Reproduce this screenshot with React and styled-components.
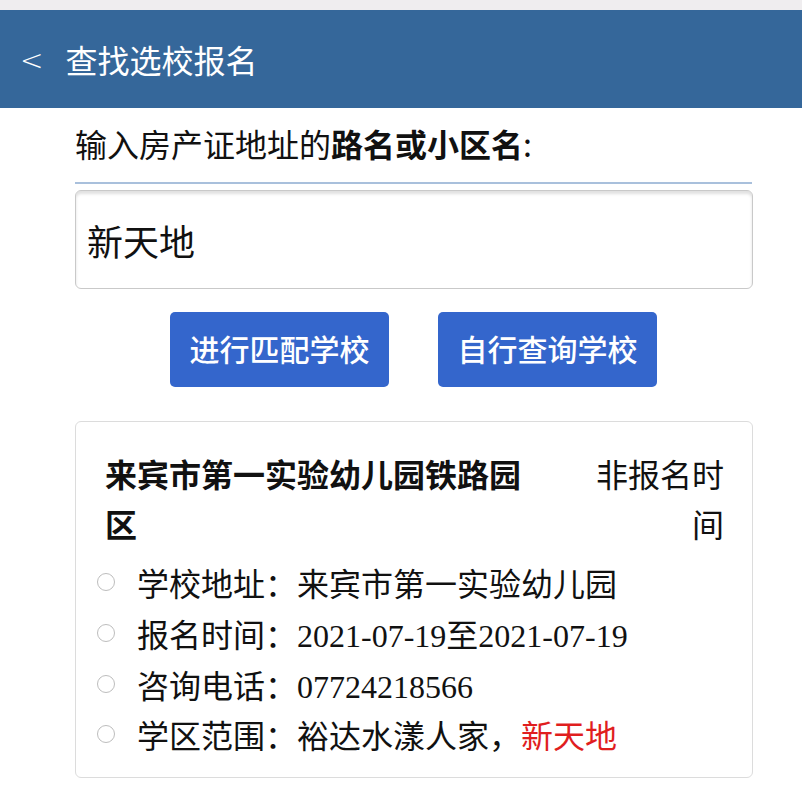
import styled, { createGlobalStyle } from 'styled-components';

const GlobalStyle = createGlobalStyle`
  body {
    margin: 0;
    background: #fff;
    font-family: "Noto Sans CJK SC", "Noto Sans", sans-serif;
    color: #111;
  }
`;

const details = [
  { label: '学校地址：', value: '来宾市第一实验幼儿园' },
  { label: '报名时间：', value: '2021-07-19至2021-07-19' },
  { label: '咨询电话：', value: '07724218566' },
  { label: '学区范围：', value: '裕达水漾人家，', hit: '新天地' },
];

const App = () => {
  return (
    <>
      <GlobalStyle />
      <S.Page>
        <S.StatusStrip />
        <S.Header>
          <S.Back>&lt;</S.Back>
          <S.Title>查找选校报名</S.Title>
        </S.Header>
        <S.Content>
          <S.Label>
            输入房产证地址的<b>路名或小区名</b>:
          </S.Label>
          <S.Divider />
          <S.Input>新天地</S.Input>
          <S.Actions>
            <S.Button>进行匹配学校</S.Button>
            <S.Button>自行查询学校</S.Button>
          </S.Actions>
          <S.Card>
            <S.CardHead>
              <S.SchoolName>来宾市第一实验幼儿园铁路园区</S.SchoolName>
              <S.Status>非报名时间</S.Status>
            </S.CardHead>
            <S.List>
              {details.map(item => (
                <S.Item key={item.label}>
                  <S.Dot />
                  <span>
                    {item.label}
                    {item.value}
                    {item.hit && <S.Hit>{item.hit}</S.Hit>}
                  </span>
                </S.Item>
              ))}
            </S.List>
          </S.Card>
        </S.Content>
      </S.Page>
    </>
  );
};

// -------------------------------------------------- styling ----------------------------------------------
const S = {};
S.Page = styled.div`
  width: 802px;
  min-height: 793px;
  background: #fff;
`;

S.StatusStrip = styled.div`
  height: 10px;
  background: #efedef;
`;

S.Header = styled.div`
  height: 98px;
  display: flex;
  align-items: center;
  padding-left: 20px;
  background: #35679a;
  color: #fff;
`;

S.Back = styled.span`
  font-family: "DejaVu Sans", sans-serif;
  font-size: 28px;
  font-weight: 200;
  margin-right: 22px;
  margin-top: 2px;
`;

S.Title = styled.h1`
  margin: 0;
  font-size: 32px;
  font-weight: 400;
`;

S.Content = styled.div`
  padding: 0 49px 0 75px;
`;

S.Label = styled.div`
  margin-top: 15px;
  font-size: 32px;
  line-height: 40px;

  b {
    font-weight: 700;
  }
`;

S.Divider = styled.div`
  margin-top: 19px;
  height: 2px;
  margin-right: 1px;
  background: #a9c0dc;
`;

S.Input = styled.div`
  margin-top: 6px;
  height: 99px;
  box-sizing: border-box;
  display: flex;
  align-items: center;
  padding-left: 11px;
  border: 1px solid #c9c9c9;
  border-radius: 6px;
  box-shadow: inset 0 3px 3px rgba(0, 0, 0, 0.12);
  font-size: 36px;
`;

S.Actions = styled.div`
  display: flex;
  justify-content: center;
  gap: 49px;
  margin-top: 23px;
  padding-right: 1px;
`;

S.Button = styled.button`
  width: 219px;
  height: 75px;
  padding: 0 0 4px;
  border: 0;
  border-radius: 5px;
  background: #3466cc;
  color: #fff;
  font-family: "Noto Sans CJK SC", sans-serif;
  font-size: 30px;
  font-weight: 500;
  cursor: pointer;
`;

S.Card = styled.div`
  margin-top: 34px;
  height: 357px;
  box-sizing: border-box;
  padding: 26px 28px 18px 21px;
  border: 1px solid #dcdcdc;
  border-radius: 6px;
`;

S.CardHead = styled.div`
  display: flex;
  justify-content: space-between;
  align-items: flex-start;
  padding-left: 8px;
  font-size: 32px;
  line-height: 50px;
`;

S.SchoolName = styled.div`
  width: 432px;
  font-weight: 700;
`;

S.Status = styled.div`
  width: 128px;
  text-align: right;
`;

S.List = styled.ul`
  list-style: none;
  margin: 9px 0 0;
  padding: 0;
`;

S.Item = styled.li`
  display: flex;
  align-items: center;
  gap: 22px;
  height: 50.7px;
  font-family: "Liberation Serif", "Noto Sans CJK SC", serif;
  font-size: 32px;
`;

S.Dot = styled.span`
  width: 16px;
  height: 16px;
  border: 1px solid #bdbdbd;
  border-radius: 50%;
  flex-shrink: 0;
`;

S.Hit = styled.span`
  color: #e01e1e;
`;

export default App;
